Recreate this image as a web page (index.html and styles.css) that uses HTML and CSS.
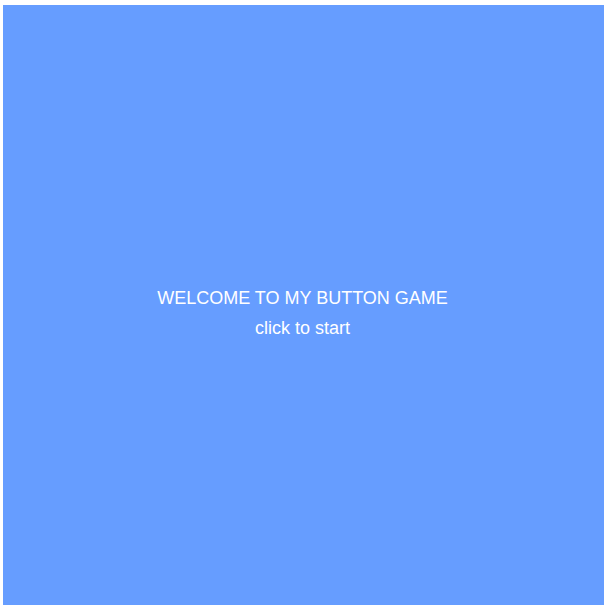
FILE: index.html
```html
<!DOCTYPE html>
<html>
<head>
<meta charset="utf-8">
<link rel="stylesheet" href="styles.css">
</head>
<body>
<div class="game">
  <div class="intro">
    <div class="title">WELCOME TO MY BUTTON GAME</div>
    <div class="start">click to start</div>
  </div>
</div>
</body>
</html>
```

FILE: styles.css
```css
html, body {
  margin: 0;
  padding: 0;
  background: #ffffff;
}
body {
  padding: 5px 0 0 3px;
  font-family: "Liberation Sans", Arial, sans-serif;
}
.game {
  width: 601px;
  height: 600px;
  background: #669dff;
  color: #ffffff;
  display: flex;
  align-items: center;
  justify-content: center;
}
.intro {
  display: flex;
  flex-direction: column;
  align-items: center;
  gap: 9px;
  font-size: 18px;
  line-height: 21px;
  padding-top: 16px;
  padding-right: 2px;
}
```
